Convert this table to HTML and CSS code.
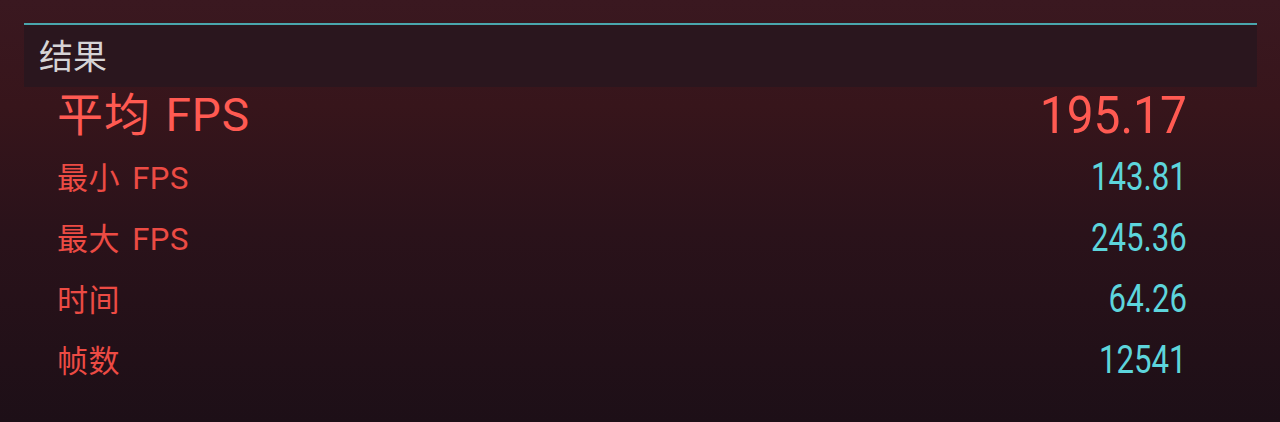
FILE: index.html
```html
<!DOCTYPE html>
<html lang="zh-CN">
<head>
    <meta charset="UTF-8">
    <meta name="viewport" content="width=device-width, initial-scale=1.0">
    <title>结果</title>
    <link rel="stylesheet" href="styles.css">
</head>
<body>
    <!-- Results Panel -->
    <div class="panel">
        <div class="panel-head">
            <h2>结果</h2>
        </div>
        <div class="stats">
            <div class="row main">
                <span class="label">平均 FPS</span>
                <span class="value">195.17</span>
            </div>
            <div class="row">
                <span class="label">最小 FPS</span>
                <span class="value">143.81</span>
            </div>
            <div class="row">
                <span class="label">最大 FPS</span>
                <span class="value">245.36</span>
            </div>
            <div class="row">
                <span class="label">时间</span>
                <span class="value">64.26</span>
            </div>
            <div class="row">
                <span class="label">帧数</span>
                <span class="value">12541</span>
            </div>
        </div>
    </div>
</body>
</html>
```

FILE: styles.css
```css
/* Basic Reset */
* {
    box-sizing: border-box;
    margin: 0;
    padding: 0;
}

body {
    height: 422px;
    overflow: hidden;
    font-family: "Roboto", "Noto Sans CJK SC", sans-serif;
    background: linear-gradient(#3a1820 0%, #37151b 25%, #2a121a 55%, #1d0f17 100%);
}

/* Panel */
.panel {
    margin: 23px 23px 0 24px;
}

.panel-head {
    height: 64px;
    border-top: 2px solid #4aa6ad;
    background-color: #2a161e;
    display: flex;
    align-items: center;
    padding-left: 15px;
}

.panel-head h2 {
    font-family: "Noto Sans CJK SC", sans-serif;
    font-size: 34px;
    font-weight: 400;
    color: #d6d4d6;
    line-height: 1;
    margin-top: -2px;
}

/* Stat rows */
.stats {
    padding: 0 70px 0 33px;
}

.row {
    height: 61px;
    display: flex;
    align-items: center;
    justify-content: space-between;
}

.row.main {
    height: 60px;
}

.label {
    font-size: 31px;
    color: #ec4b44;
    line-height: 1;
    word-spacing: 4px;
    letter-spacing: 0.5px;
    margin-top: 2px;
}

.value {
    display: inline-block;
    font-size: 39px;
    color: #5dd5dc;
    line-height: 1;
    transform: scaleX(0.8);
    transform-origin: right center;
}

.main .label {
    font-size: 46px;
    color: #ff5a52;
    word-spacing: 2px;
    letter-spacing: 1px;
    margin-top: -4px;
}

.main .value {
    font-size: 52px;
    color: #ff5a52;
    transform: scaleX(0.92);
    margin-top: -2px;
}
```
